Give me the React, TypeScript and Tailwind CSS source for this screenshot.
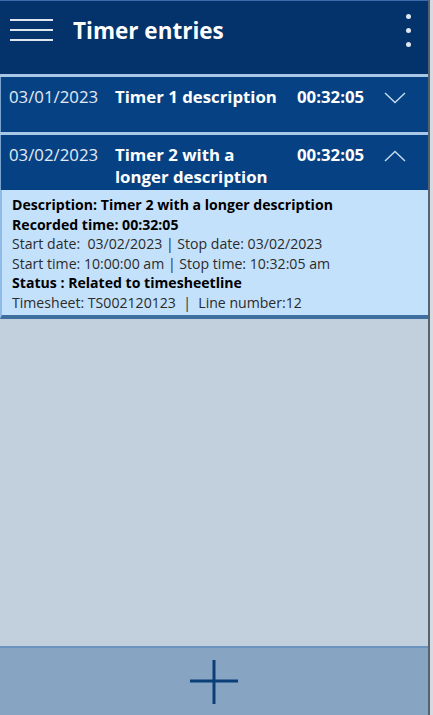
import React, { useState } from 'react';

interface ITimerEntry {
  id: string;
  date: string;
  description: string;
  duration: string;
  startDate: string;
  stopDate: string;
  startTime: string;
  stopTime: string;
  status: string;
  timesheet: string;
  lineNumber: number;
}

const entries: ITimerEntry[] = [
  {
    id: 't1',
    date: '03/01/2023',
    description: 'Timer 1 description',
    duration: '00:32:05',
    startDate: '03/01/2023',
    stopDate: '03/01/2023',
    startTime: '10:00:00 am',
    stopTime: '10:32:05 am',
    status: 'Related to timesheetline',
    timesheet: 'TS002120123',
    lineNumber: 11,
  },
  {
    id: 't2',
    date: '03/02/2023',
    description: 'Timer 2 with a longer description',
    duration: '00:32:05',
    startDate: '03/02/2023',
    stopDate: '03/02/2023',
    startTime: '10:00:00 am',
    stopTime: '10:32:05 am',
    status: 'Related to timesheetline',
    timesheet: 'TS002120123',
    lineNumber: 12,
  },
];

const Chevron = ({ up }: { up: boolean }) => (
  <svg width="22" height="12" viewBox="0 0 22 12" fill="none" stroke="#c9dbef" strokeWidth="1.4">
    {up ? <path d="M1 11 L11 1.5 L21 11" /> : <path d="M1 1 L11 10.5 L21 1" />}
  </svg>
);

const App: React.FC = () => {
  const [openId, setOpenId] = useState<string | null>('t2');

  return (
    <div
      className="h-[715px] w-[433px] bg-[#d4dbe3] overflow-hidden"
      style={{ fontFamily: '"Open Sans", "Noto Sans", sans-serif' }}
    >
      <div className="flex flex-col h-full w-[430px] border-r-2 border-[#59626c] bg-[#c2cfdc]">
        {/* Header */}
        <div className="h-[74px] shrink-0 bg-[#03336a] border-t border-[#3a6cad] flex items-start">
          <div className="flex flex-col gap-[8px] pl-[10px] pt-[18px]">
            <span className="block w-[43px] h-[2px] bg-[#dde6f1]" />
            <span className="block w-[43px] h-[2px] bg-[#dde6f1]" />
            <span className="block w-[43px] h-[2px] bg-[#dde6f1]" />
          </div>
          <h1 className="ml-[20px] mt-[14px] text-[22.5px] font-bold text-white leading-[32px]">Timer entries</h1>
          <div className="ml-auto mr-[17px] mt-[13px] flex flex-col gap-[9px]">
            <span className="block w-[5px] h-[5px] rounded-full bg-[#dde6f1]" />
            <span className="block w-[5px] h-[5px] rounded-full bg-[#dde6f1]" />
            <span className="block w-[5px] h-[5px] rounded-full bg-[#dde6f1]" />
          </div>
        </div>

        {/* Entries */}
        {entries.map((entry) => {
          const open = openId === entry.id;
          return (
            <div key={entry.id} className="border-t-[3px] border-[#a8c7e6]">
              <button
                type="button"
                onClick={() => setOpenId(open ? null : entry.id)}
                className="w-full min-h-[55px] bg-[#064283] border-l border-[#7aa2cf] flex items-start text-left pt-[9px] pb-[2px] text-white"
              >
                <span className="w-[114px] shrink-0 pl-[8px] text-[16.8px] leading-[22px] text-[#e3ebf5]">{entry.date}</span>
                <span className="w-[182px] shrink-0 pr-[12px] text-[16.8px] font-bold leading-[22px]">{entry.description}</span>
                <span className="w-[86px] shrink-0 text-[16.8px] font-bold leading-[22px]">{entry.duration}</span>
                <span className="pt-[6px] pl-[1px]">
                  <Chevron up={open} />
                </span>
              </button>

              {open && (
                <div className="bg-[#c4e1fb] border-l-2 border-[#8fbbe6] border-b-[4px] border-b-[#3f6f9f] pl-[10px] pt-[5px] pb-[3px] text-[14.1px] leading-[19.5px] text-[#2b2b2b]">
                  <p className="font-bold text-black">Description: {entry.description}</p>
                  <p className="font-bold text-black">Recorded time: {entry.duration}</p>
                  <p>
                    Start date:&nbsp; {entry.startDate} | Stop date: {entry.stopDate}
                  </p>
                  <p>
                    Start time: {entry.startTime} | Stop time: {entry.stopTime}
                  </p>
                  <p className="font-bold text-black">Status : {entry.status}</p>
                  <p>
                    Timesheet: {entry.timesheet}&nbsp; |&nbsp; Line number:{entry.lineNumber}
                  </p>
                </div>
              )}
            </div>
          );
        })}

        <div className="flex-1" />

        {/* Add button bar */}
        <div className="h-[69px] shrink-0 bg-[#87a5c2] border-t-2 border-[#6a93bd] flex items-center justify-center">
          <svg width="48" height="46" viewBox="0 0 48 46" fill="none" stroke="#0b3f78" strokeWidth="3">
            <path d="M24 1 V45" />
            <path d="M0 22 H48" />
          </svg>
        </div>
      </div>
    </div>
  );
};

export default App;
